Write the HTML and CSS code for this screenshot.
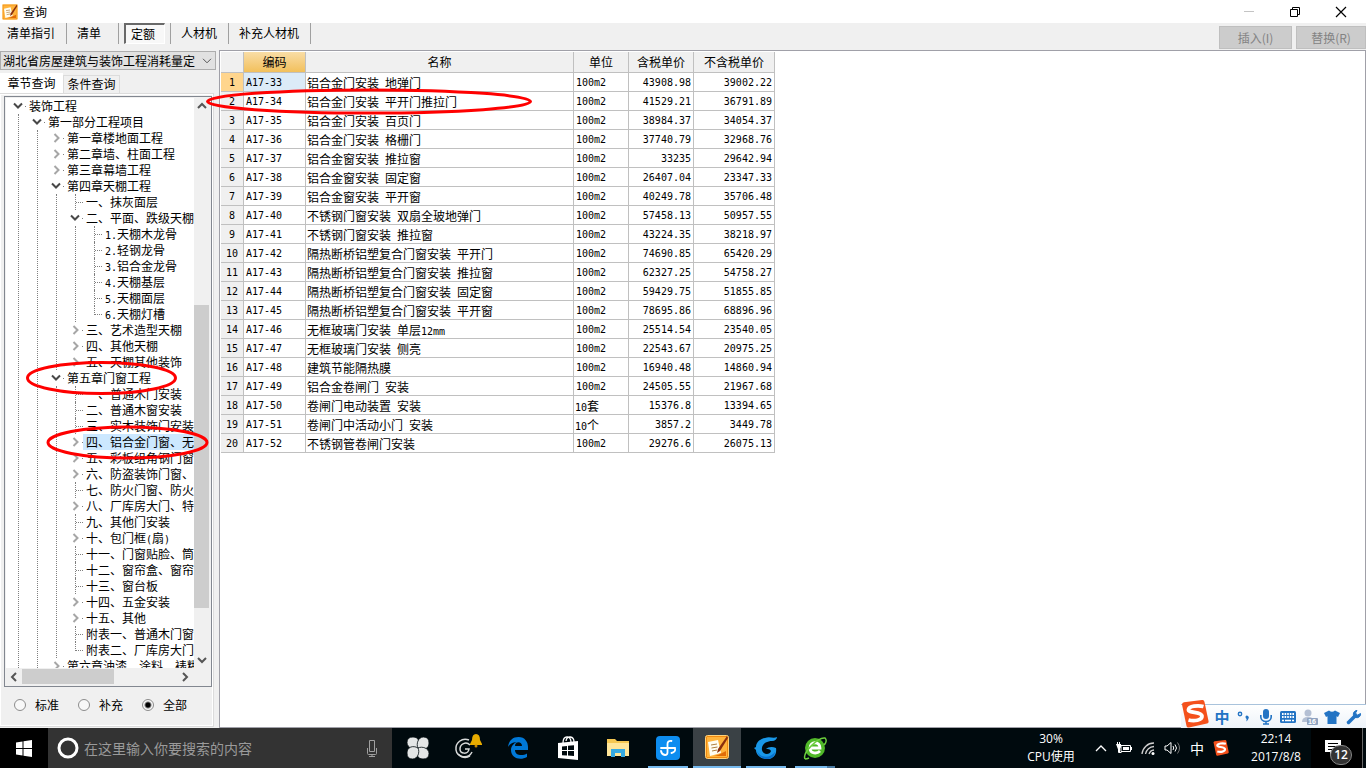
FILE: index.html
```html
<!DOCTYPE html>
<html lang="zh-CN">
<head>
<meta charset="utf-8">
<title>查询</title>
<link rel="stylesheet" href="styles.css">
</head>
<body>
<svg class="defs" aria-hidden="true">
  <symbol id="down" viewBox="0 0 10 8"><path d="M1 1.5l4 4 4-4" fill="none" stroke="#484848" stroke-width="2"/></symbol>
  <symbol id="right" viewBox="0 0 8 10"><path d="M1.5 1l4 4-4 4" fill="none" stroke="#a6a6a6" stroke-width="2"/></symbol>
  <symbol id="estimate" viewBox="0 0 24 24">
    <rect x=".5" y=".5" width="23" height="23" rx="2" fill="#f08a10" stroke="#ffd27a"/>
    <rect x="2" y="2" width="20" height="20" fill="#ffb43c"/>
    <path d="M3 7l10-2 3 13-11 3z" fill="#fffdf2"/>
    <path d="M6 10l6-1M6.500 13l6-1M7 16l5-1" stroke="#b08040" fill="none"/>
    <path d="M22 1l-9 13-1 4 3-2 8-13z" fill="#8a2f0c"/>
    <path d="M13 20l8-4v5H9z" fill="#e06c08"/>
  </symbol>
  <symbol id="sogou" viewBox="0 0 28 28">
    <path d="M1 4.500Q1 2.500 3 2.200L21 0q2-.2 2.500 2l4 19q.4 2-1.500 2.500L8 27.500q-2 .4-2.500-1.500z" fill="#f4511c"/>
    <path d="M22.500 6.500C17 5 8 6 7.500 9.500c-.5 4 13 1.500 13.500 6.500.3 4.500-8 5.500-13.500 4" fill="none" stroke="#fff" stroke-width="3.800"/>
  </symbol>
</svg>

<header class="titlebar">
  <svg class="app-icon"><use href="#estimate"/></svg>
  <h1 class="title">查询</h1>
  <div class="window-buttons">
    <button class="win" aria-label="最小化"><svg width="12" height="12"><path d="M1 5.500h10" stroke="#c4c4c4"/></svg></button>
    <button class="win" aria-label="还原"><svg width="12" height="12"><path d="M1.500 3.500h7v7h-7zM3.500 3V1.500h7v7H9" fill="none" stroke="#000"/></svg></button>
    <button class="win" aria-label="关闭"><svg width="12" height="12"><path d="M1 1l10 10M11 1L1 11" stroke="#000" stroke-width="1.200"/></svg></button>
  </div>
</header>

<nav class="toolbar">
  <div class="modes">
    <button class="mode">清单指引</button>
    <button class="mode">清单</button>
    <button class="mode pressed"><span class="well">定额</span></button>
    <button class="mode">人材机</button>
    <button class="mode">补充人材机</button>
  </div>
  <div class="actions">
    <button class="action" disabled>插入(I)</button>
    <button class="action" disabled>替换(R)</button>
  </div>
</nav>

<main class="work">
  <aside class="side">
    <div class="combo">
      <select class="combo-select" aria-label="定额库"><option>湖北省房屋建筑与装饰工程消耗量定</option></select>
      <svg class="combo-arrow" viewBox="0 0 10 6"><path d="M1 .8l4 4 4-4" fill="none" stroke="#555"/></svg>
    </div>
    <div class="tabs">
      <button class="tab current">章节查询</button>
      <button class="tab">条件查询</button>
    </div>
    <section class="page">
      <div class="tree-box">
        <div class="tree-row">
          <div class="tree">
            <ul class="list root">
              <li><div class="row"><span class="tg"><svg class="dn"><use href="#down"/></svg></span><span class="label">装饰工程</span></div>
                <ul class="list nested">
                  <li><div class="row"><span class="tg"><svg class="dn"><use href="#down"/></svg></span><span class="label">第一部分工程项目</span></div>
                    <ul class="list nested">
                      <li><div class="row"><span class="tg"><svg class="rt"><use href="#right"/></svg></span><span class="label">第一章楼地面工程</span></div></li>
                      <li><div class="row"><span class="tg"><svg class="rt"><use href="#right"/></svg></span><span class="label">第二章墙、柱面工程</span></div></li>
                      <li><div class="row"><span class="tg"><svg class="rt"><use href="#right"/></svg></span><span class="label">第三章幕墙工程</span></div></li>
                      <li><div class="row"><span class="tg"><svg class="dn"><use href="#down"/></svg></span><span class="label">第四章天棚工程</span></div>
                        <ul class="list nested">
                          <li><div class="row"><span class="leaf"></span><span class="label">一、抹灰面层</span></div></li>
                          <li><div class="row"><span class="tg"><svg class="dn"><use href="#down"/></svg></span><span class="label">二、平面、跌级天棚</span></div>
                            <ul class="list nested">
                              <li><div class="row"><span class="leaf"></span><span class="label"><span class="m">1.</span>天棚木龙骨</span></div></li>
                              <li><div class="row"><span class="leaf"></span><span class="label"><span class="m">2.</span>轻钢龙骨</span></div></li>
                              <li><div class="row"><span class="leaf"></span><span class="label"><span class="m">3.</span>铝合金龙骨</span></div></li>
                              <li><div class="row"><span class="leaf"></span><span class="label"><span class="m">4.</span>天棚基层</span></div></li>
                              <li><div class="row"><span class="leaf"></span><span class="label"><span class="m">5.</span>天棚面层</span></div></li>
                              <li><div class="row"><span class="leaf end"></span><span class="label"><span class="m">6.</span>天棚灯槽</span></div></li>
                            </ul>
                          </li>
                          <li><div class="row"><span class="tg"><svg class="rt"><use href="#right"/></svg></span><span class="label">三、艺术造型天棚</span></div></li>
                          <li><div class="row"><span class="tg"><svg class="rt"><use href="#right"/></svg></span><span class="label">四、其他天棚</span></div></li>
                          <li><div class="row"><span class="tg"><svg class="rt"><use href="#right"/></svg></span><span class="label">五、天棚其他装饰</span></div></li>
                        </ul>
                      </li>
                      <li><div class="row"><span class="tg"><svg class="dn"><use href="#down"/></svg></span><span class="label">第五章门窗工程</span></div>
                        <ul class="list nested">
                          <li><div class="row"><span class="leaf"></span><span class="label">一、普通木门安装</span></div></li>
                          <li><div class="row"><span class="leaf"></span><span class="label">二、普通木窗安装</span></div></li>
                          <li><div class="row"><span class="leaf"></span><span class="label">三、实木装饰门安装</span></div></li>
                          <li><div class="row"><span class="tg"><svg class="rt"><use href="#right"/></svg></span><span class="label selected">四、铝合金门窗、无</span></div></li>
                          <li><div class="row"><span class="tg"><svg class="rt"><use href="#right"/></svg></span><span class="label">五、彩板组角钢门窗</span></div></li>
                          <li><div class="row"><span class="tg"><svg class="rt"><use href="#right"/></svg></span><span class="label">六、防盗装饰门窗、</span></div></li>
                          <li><div class="row"><span class="leaf"></span><span class="label">七、防火门窗、防火</span></div></li>
                          <li><div class="row"><span class="tg"><svg class="rt"><use href="#right"/></svg></span><span class="label">八、厂库房大门、特</span></div></li>
                          <li><div class="row"><span class="leaf"></span><span class="label">九、其他门安装</span></div></li>
                          <li><div class="row"><span class="tg"><svg class="rt"><use href="#right"/></svg></span><span class="label">十、包门框<span class="m">(</span>扇<span class="m">)</span></span></div></li>
                          <li><div class="row"><span class="leaf"></span><span class="label">十一、门窗贴脸、筒</span></div></li>
                          <li><div class="row"><span class="leaf"></span><span class="label">十二、窗帘盒、窗帘</span></div></li>
                          <li><div class="row"><span class="leaf"></span><span class="label">十三、窗台板</span></div></li>
                          <li><div class="row"><span class="tg"><svg class="rt"><use href="#right"/></svg></span><span class="label">十四、五金安装</span></div></li>
                          <li><div class="row"><span class="tg"><svg class="rt"><use href="#right"/></svg></span><span class="label">十五、其他</span></div></li>
                          <li><div class="row"><span class="leaf"></span><span class="label">附表一、普通木门窗</span></div></li>
                          <li><div class="row"><span class="leaf end"></span><span class="label">附表二、厂库房大门</span></div></li>
                        </ul>
                      </li>
                      <li><div class="row"><span class="tg"><svg class="rt"><use href="#right"/></svg></span><span class="label">第六章油漆、涂料、裱糊</span></div></li>
                    </ul>
                  </li>
                </ul>
              </li>
            </ul>
          </div>
          <div class="vbar">
            <svg class="arrow"><path d="M4 10l4-4 4 4" /></svg>
            <div class="vtrack"><div class="vthumb"></div></div>
            <svg class="arrow"><path d="M4 6l4 4 4-4" /></svg>
          </div>
        </div>
        <div class="hbar">
          <svg class="arrow"><path d="M10 4L6 8l4 4" /></svg>
          <div class="htrack"><div class="hthumb"></div></div>
          <svg class="arrow"><path d="M6 4l4 4-4 4" /></svg>
        </div>
      </div>
      <div class="scope">
        <label class="choice"><input class="radio" type="radio" name="scope">标准</label>
        <label class="choice"><input class="radio" type="radio" name="scope">补充</label>
        <label class="choice"><input class="radio" type="radio" name="scope" checked>全部</label>
      </div>
    </section>
  </aside>

  <section class="content">
    <table class="grid">
      <colgroup><col class="c-no"><col class="c-code"><col class="c-name"><col class="c-unit"><col class="c-tax"><col class="c-net"></colgroup>
      <thead><tr><th></th><th class="hot">编码</th><th>名称</th><th>单位</th><th>含税单价</th><th>不含税单价</th></tr></thead>
      <tbody>
        <tr class="active"><th>1</th><td class="m">A17-33</td><td>铝合金门安装<span class="m"> </span>地弹门</td><td class="m">100m2</td><td class="m num">43908.98</td><td class="m num">39002.22</td></tr>
        <tr><th>2</th><td class="m">A17-34</td><td>铝合金门安装<span class="m"> </span>平开门推拉门</td><td class="m">100m2</td><td class="m num">41529.21</td><td class="m num">36791.89</td></tr>
        <tr><th>3</th><td class="m">A17-35</td><td>铝合金门安装<span class="m"> </span>百页门</td><td class="m">100m2</td><td class="m num">38984.37</td><td class="m num">34054.37</td></tr>
        <tr><th>4</th><td class="m">A17-36</td><td>铝合金门安装<span class="m"> </span>格栅门</td><td class="m">100m2</td><td class="m num">37740.79</td><td class="m num">32968.76</td></tr>
        <tr><th>5</th><td class="m">A17-37</td><td>铝合金窗安装<span class="m"> </span>推拉窗</td><td class="m">100m2</td><td class="m num">33235</td><td class="m num">29642.94</td></tr>
        <tr><th>6</th><td class="m">A17-38</td><td>铝合金窗安装<span class="m"> </span>固定窗</td><td class="m">100m2</td><td class="m num">26407.04</td><td class="m num">23347.33</td></tr>
        <tr><th>7</th><td class="m">A17-39</td><td>铝合金窗安装<span class="m"> </span>平开窗</td><td class="m">100m2</td><td class="m num">40249.78</td><td class="m num">35706.48</td></tr>
        <tr><th>8</th><td class="m">A17-40</td><td>不锈钢门窗安装<span class="m"> </span>双扇全玻地弹门</td><td class="m">100m2</td><td class="m num">57458.13</td><td class="m num">50957.55</td></tr>
        <tr><th>9</th><td class="m">A17-41</td><td>不锈钢门窗安装<span class="m"> </span>推拉窗</td><td class="m">100m2</td><td class="m num">43224.35</td><td class="m num">38218.97</td></tr>
        <tr><th>10</th><td class="m">A17-42</td><td>隔热断桥铝塑复合门窗安装<span class="m"> </span>平开门</td><td class="m">100m2</td><td class="m num">74690.85</td><td class="m num">65420.29</td></tr>
        <tr><th>11</th><td class="m">A17-43</td><td>隔热断桥铝塑复合门窗安装<span class="m"> </span>推拉窗</td><td class="m">100m2</td><td class="m num">62327.25</td><td class="m num">54758.27</td></tr>
        <tr><th>12</th><td class="m">A17-44</td><td>隔热断桥铝塑复合门窗安装<span class="m"> </span>固定窗</td><td class="m">100m2</td><td class="m num">59429.75</td><td class="m num">51855.85</td></tr>
        <tr><th>13</th><td class="m">A17-45</td><td>隔热断桥铝塑复合门窗安装<span class="m"> </span>平开窗</td><td class="m">100m2</td><td class="m num">78695.86</td><td class="m num">68896.96</td></tr>
        <tr><th>14</th><td class="m">A17-46</td><td>无框玻璃门安装<span class="m"> </span>单层<span class="m">12mm</span></td><td class="m">100m2</td><td class="m num">25514.54</td><td class="m num">23540.05</td></tr>
        <tr><th>15</th><td class="m">A17-47</td><td>无框玻璃门安装<span class="m"> </span>侧亮</td><td class="m">100m2</td><td class="m num">22543.67</td><td class="m num">20975.25</td></tr>
        <tr><th>16</th><td class="m">A17-48</td><td>建筑节能隔热膜</td><td class="m">100m2</td><td class="m num">16940.48</td><td class="m num">14860.94</td></tr>
        <tr><th>17</th><td class="m">A17-49</td><td>铝合金卷闸门<span class="m"> </span>安装</td><td class="m">100m2</td><td class="m num">24505.55</td><td class="m num">21967.68</td></tr>
        <tr><th>18</th><td class="m">A17-50</td><td>卷闸门电动装置<span class="m"> </span>安装</td><td><span class="m">10</span>套</td><td class="m num">15376.8</td><td class="m num">13394.65</td></tr>
        <tr><th>19</th><td class="m">A17-51</td><td>卷闸门中活动小门<span class="m"> </span>安装</td><td><span class="m">10</span>个</td><td class="m num">3857.2</td><td class="m num">3449.78</td></tr>
        <tr><th>20</th><td class="m">A17-52</td><td>不锈钢管卷闸门安装</td><td class="m">100m2</td><td class="m num">29276.6</td><td class="m num">26075.13</td></tr>
      </tbody>
    </table>
  </section>
</main>

<svg class="marks" width="560" height="480" aria-hidden="true">
  <g fill="none" stroke="#f00" stroke-width="3">
    <ellipse cx="369" cy="101.500" rx="161.500" ry="11.500"/>
    <ellipse cx="101.500" cy="378" rx="74" ry="15.500"/>
    <ellipse cx="127.500" cy="442.500" rx="79.500" ry="15.500"/>
  </g>
</svg>

<div class="ime">
  <svg class="ime-logo"><use href="#sogou"/></svg>
  <button class="ime-key zh">中</button>
  <button class="ime-key" aria-label="标点"><svg width="16" height="16" viewBox="0 0 16 16"><circle cx="4" cy="5" r="1.700" fill="none" stroke="#2374c4" stroke-width="1.400"/><path d="M9.500 7.500a1.800 1.800 0 1 1 3 2q-.5 2-2.500 3 .8-1.500.6-2.500-1.300-.8-1.100-2.500z" fill="#2374c4"/></svg></button>
  <button class="ime-key" aria-label="语音"><svg width="16" height="16" viewBox="0 0 16 16"><rect x="5" y="0" width="6" height="10" rx="3" fill="#2374c4"/><path d="M2.800 6v2a5.200 4.500 0 0 0 10.400 0V6M8 12v3M5 15h6" fill="none" stroke="#2374c4" stroke-width="1.600"/></svg></button>
  <button class="ime-key" aria-label="键盘"><svg width="16" height="16" viewBox="0 0 16 16"><rect x="0" y="2" width="16" height="12" rx="1.500" fill="#2374c4"/><path d="M2 5h12M2 8h12" stroke="#fff" stroke-width="2" stroke-dasharray="1.600 1"/><path d="M2 11.500h2M5 11.500h6M12 11.500h2" stroke="#fff" stroke-width="1.600"/></svg></button>
  <button class="ime-key" aria-label="账户"><svg width="16" height="16" viewBox="0 0 16 16"><circle cx="6" cy="4" r="3.500" fill="#b4c0d4"/><path d="M0 13q0-5 6-5t6 5z" fill="#b4c0d4"/><rect x="5" y="9" width="11" height="7" rx="1" fill="#8fa2c0"/><text class="tiny" x="6" y="15">16</text></svg></button>
  <button class="ime-key" aria-label="皮肤"><svg width="16" height="16" viewBox="0 0 16 16"><path d="M5 1.500q3 2.500 6 0L16 4l-2 4-1.500-.8V15h-9V7.200L2 8 0 4z" fill="#2374c4"/></svg></button>
  <button class="ime-key" aria-label="工具"><svg width="16" height="16" viewBox="0 0 16 16"><path d="M2.500 13.500L9 7" stroke="#2374c4" stroke-width="3.500" stroke-linecap="round"/><path d="M14.500 4.500A3.600 3.600 0 1 1 11 1.500L9.500 4l2 2.200z" fill="#2374c4" stroke="#2374c4"/></svg></button>
</div>

<footer class="taskbar">
  <button class="start" aria-label="开始"><svg width="16" height="17"><path d="M0 2.500l6.500-1V8H0zM7.500 1.300L16 0v8H7.500zM0 9h6.500v6.500l-6.500-1zM7.500 9H16v8l-8.500-1.300z" fill="#fff"/></svg></button>
  <div class="search">
    <svg class="cortana" width="22" height="22"><circle cx="11" cy="11" r="9" fill="none" stroke="#fff" stroke-width="3"/></svg>
    <input class="query" type="text" placeholder="在这里输入你要搜索的内容" aria-label="搜索">
    <svg class="mic" width="12" height="17"><path d="M3.500.5h5v11h-5zM1.500 8v5.500q0 1 1 1h7q1 0 1-1V8M6 14.500v2M3 16.500h6" fill="none" stroke="#a0a0a0"/></svg>
  </div>
  <div class="apps wide">
    <button class="app" aria-label="应用"><svg width="22" height="22" viewBox="0 0 22 22"><g fill="#e4e6e6" stroke="#000a0e" stroke-width=".8"><path id="petal" d="M11 11C7 13 0 11 0 5.500Q0 0 6 0c6 0 8 6 5 11z"/><use href="#petal" transform="rotate(90 11 11)"/><use href="#petal" transform="rotate(180 11 11)"/><use href="#petal" transform="rotate(270 11 11)"/></g></svg></button>
    <button class="app" aria-label="提醒"><svg width="28" height="28" viewBox="0 0 28 28"><g fill="none" stroke="#d8dada" stroke-width="1.500"><path d="M15 6C8 3 1 9 2 16s12 10 16 2"/><path d="M16 11c-4-4-10-1-10 4s8 6 9 0h-4"/><path d="M4 20q6 6 12 2"/></g><path d="M22 0q4 0 4 6l2 4v1H16v-1l2-4q0-6 4-6z" fill="#e8ac00"/><circle cx="22" cy="12" r="1.500" fill="#c88a00"/></svg></button>
    <button class="app" aria-label="Edge"><svg width="22" height="22" viewBox="0 0 22 22"><path d="M1 10C2 3 6 0 11.500 0 18 0 21 5 21 10v3H8c0 6 8 6 12 3.500V20c-7 4-16 1-16-7 0-4 3-7 6-8-5 0-8 3-9 5zm7-1h7c0-5-7-5-7 0z" fill="#0078d7" fill-rule="evenodd"/></svg></button>
    <button class="app" aria-label="商店"><svg width="22" height="24" viewBox="0 0 22 24"><path d="M1 7l20-2v19L1 22z" fill="#fff"/><path d="M6 7c0-8 8-8 8-1M9 5c1-6 8-5 8 1" fill="none" stroke="#fff" stroke-width="1.300"/><path d="M5 10.500l5-.5v4H5zM11 9.800l6-.6V14h-6zM5 15h5v4.500l-5-.3zM11 15h6v5l-6-.4z" fill="#000a0e"/></svg></button>
    <button class="app" aria-label="资源管理器"><svg width="22" height="20" viewBox="0 0 22 20"><path d="M0 1h8l2 2h12v15H0z" fill="#f5c752"/><path d="M0 5h22v13H0z" fill="#ffe599"/><path d="M4 11h14v8h-4v-4H8v4H4z" fill="#36a9e1"/></svg></button>
  </div>
  <div class="apps">
    <button class="app open" aria-label="同步"><svg width="24" height="24" viewBox="0 0 24 24"><rect width="24" height="24" rx="4" fill="#0d8df0"/><path d="M15.500 5q-4-.5-4 3v8.500q0 2.500-2.500 2.500-3.500-.5-4-4M5 12h14q1 4-3.500 5" fill="none" stroke="#fff" stroke-width="1.800" stroke-linecap="round"/></svg></button>
    <button class="app focused" aria-label="计价"><svg width="24" height="24"><use href="#estimate"/></svg></button>
    <button class="app open" aria-label="广联达"><svg width="24" height="24" viewBox="0 0 24 24"><path d="M23 1c-4 2-7-1-12 1C5 3 2 7 2 11l-2 1 2 2c0 5 5 9 11 9 7 0 10-5 9-11-4-2-8-1-10 1 2 0 4 0 5 2-1 4-8 4-9-1-1-6 5-9 10-9 3 0 5-2 5-4z" fill="#1998e8"/><path d="M3 15c3 7 13 8 18 1-1 10-16 9-18-1z" fill="#0870cc"/></svg></button>
    <button class="app open last" aria-label="浏览器"><svg width="24" height="24" viewBox="0 0 24 24"><circle cx="12" cy="12" r="10" fill="#50b829"/><path d="M7 12h10c0-7-10-7-10 0 0 6 7 6 10 3" fill="none" stroke="#fff" stroke-width="2.800"/><path d="M2 23C-1 17 15 1 22 2c3 3-1 7-1 7M2 23q2 0 4-1" fill="none" stroke="#6cd03d" stroke-width="1.500"/></svg></button>
  </div>
  <div class="tray">
    <div class="readout cpu"><span>30%</span><span>CPU使用</span></div>
    <div class="tray-icons">
      <svg width="12" height="8"><path d="M1 7l5-5 5 5" fill="none" stroke="#fff" stroke-width="1.300"/></svg>
      <svg width="16" height="12" viewBox="0 0 16 12"><path d="M5 3.500h9.500v6H5z" fill="none" stroke="#fff"/><path d="M7 5h6v3H7zM15 5h1v3h-1zM0 2h5v3q0 1-1 1v4H3" fill="#fff"/><path d="M1.500 0v2M3.500 0v2M2.500 6v4.500h3" stroke="#fff" fill="none"/></svg>
      <svg width="14" height="14" viewBox="0 0 14 14"><path d="M1 13A12 12 0 0 1 13 2M4.500 13A9 9 0 0 1 13 5.500M8 13a6 6 0 0 1 5-4" fill="none" stroke="#d0d0d0" stroke-width="1.300"/><circle cx="12" cy="12.500" r="1.500" fill="#fff"/></svg>
      <svg width="17" height="14" viewBox="0 0 17 14"><path d="M1 5h2l4-3.500v11L3 9H1z" fill="none" stroke="#fff"/><path d="M9 5q1.500 2 0 4M11 3.500q3 3.500 0 7" fill="none" stroke="#fff"/><path d="M13.500 1.500q4 5.500 0 11" fill="none" stroke="#777"/></svg>
      <span class="lang">中</span>
      <svg width="16" height="16"><use href="#sogou"/></svg>
    </div>
    <div class="readout clock"><span>22:14</span><span>2017/8/8</span></div>
    <button class="notice" aria-label="通知"><svg width="18" height="17"><path d="M0 0h16v12H8l-3 4v-4H0z" fill="#fff"/><path d="M3 3.500h10M3 6.500h10M3 9.500h7" stroke="#000"/></svg><span class="badge">12</span></button>
  </div>
</footer>
</body>
</html>
```
FILE: styles.css
```css
* { box-sizing: border-box; }
body {
  margin: 0;
  height: 100vh;
  display: flex;
  flex-direction: column;
  overflow: hidden;
  position: relative;
  background: #f0f0f0;
  color: #000;
  font: 12px/16px "Noto Sans CJK SC", sans-serif;
}
button {
  margin: 0;
  padding: 0;
  border: 0;
  background: none;
  color: inherit;
  font: inherit;
}
svg { display: block; flex: none; }
.defs { position: absolute; width: 0; height: 0; }
.m { font-family: "DejaVu Sans Mono", monospace; font-size: 10px; white-space: pre; }
span.m { line-height: 10px; }

/* title bar */
.titlebar {
  display: flex;
  align-items: center;
  flex: none;
  height: 23px;
  padding-left: 2px;
  background: #fff;
}
.app-icon { width: 16px; height: 16px; }
.title { margin: 0 0 0 5px; font-size: 12px; font-weight: 400; }
.window-buttons { display: flex; margin-left: auto; padding-right: 2px; }
.win { display: grid; place-items: center; width: 46px; height: 22px; }

/* toolbar */
.toolbar {
  display: flex;
  justify-content: space-between;
  flex: none;
  height: 27px;
}
.modes { display: flex; height: 21px; }
.mode { padding: 0 11px 2px 10px; border-right: 1px solid #a0a0a0; }
.mode:first-child { padding-left: 7px; }
.mode:nth-child(2) { padding-right: 17px; }
.mode.pressed { padding: 0 5px; }
.well {
  display: block;
  height: 21px;
  padding: 1px 9px 0 5px;
  border: 1px solid #fff;
  border-top: 2px solid #696969;
  border-left: 2px solid #696969;
  background: #f8f8f8;
  line-height: 16px;
}
.actions { display: flex; gap: 4px; padding-top: 3px; }
.action {
  width: 73px;
  height: 23px;
  border: 1px solid #bfbfbf;
  background: #ccc;
  color: #838383;
}
.action:last-child { width: 70px; }

/* work area */
.work { display: flex; flex: 1; min-height: 0; }
.side {
  display: flex;
  flex-direction: column;
  flex: none;
  width: 219px;
  padding: 1px 5px 1px 0;
}
.combo { position: relative; margin-right: -2px; }
.combo-select {
  display: block;
  width: 100%;
  height: 19px;
  padding: 0 20px 0 2px;
  appearance: none;
  border: 1px solid #adadad;
  border-radius: 0;
  background: #e1e1e1;
  color: #000;
  font: inherit;
  line-height: 16px;
}
.combo-arrow { position: absolute; right: 4px; top: 7px; width: 10px; height: 6px; }
.tabs { display: flex; align-items: flex-end; height: 23px; }
.tab { height: 18px; width: 57px; padding-bottom: 1px; border: 1px solid #dcdcdc; border-bottom: 0; }
.tab.current { height: 20px; width: 63px; padding-bottom: 2px; background: #fff; border-color: #fff; }
.page {
  display: flex;
  flex-direction: column;
  flex: 1;
  min-height: 0;
  border: 1px solid #dcdcdc;
  border-left: 0;
  padding: 2px 1px 0 4px;
  box-shadow: inset 0 0 0 1px #fff;
}
.tree-box {
  display: flex;
  flex-direction: column;
  flex: 1;
  min-height: 0;
  border: 1px solid #828790;
  padding: 1px;
  background: #f0f0f0;
}
.tree-row { display: flex; flex: 1; min-height: 0; }
.tree { flex: 1; min-width: 0; overflow: hidden; background: #fff; }
.list { margin: 0; padding: 0; list-style: none; }
.root { padding-left: 3px; }
.nested { margin-left: 9px; padding-left: 9px; border-left: 1px dotted #808080; }
.row { display: flex; height: 16px; white-space: nowrap; }
.tg { display: flex; align-items: center; flex: none; width: 17px; padding-left: 4px; }
.tg::after { content: ""; width: 1px; height: 1px; margin-left: auto; background: #808080; }
.dn { width: 10px; height: 8px; }
.rt { width: 8px; height: 10px; margin-left: 2px; }
.leaf {
  flex: none;
  width: 8px;
  height: 16px;
  margin-left: 9px;
  border-left: 1px dotted #808080;
}
.leaf::after { content: ""; display: block; margin-top: 8px; border-top: 1px dotted #808080; }
.leaf.end { height: 9px; }
.label { flex: none; padding-left: 3px; }
.label.selected { background: #cce8ff; }
.vbar { display: flex; flex-direction: column; width: 16px; padding-right: 1px; }
.arrow { width: 16px; height: 16px; fill: none; stroke: #555; stroke-width: 2; }
.vtrack { flex: 1; padding-top: 191px; }
.vthumb { height: 303px; background: #cdcdcd; }
.hbar { display: flex; align-items: center; height: 17px; padding-right: 17px; flex: none; }
.htrack { flex: 1; }
.hthumb { width: 92px; height: 15px; background: #cdcdcd; }
.scope { display: flex; align-items: center; flex: none; height: 39px; padding: 0 0 3px 10px; }
.choice { display: flex; align-items: center; gap: 9px; width: 64px; }
.radio {
  appearance: none;
  width: 12px;
  height: 12px;
  margin: 0;
  border: 1px solid #8c8c8c;
  border-radius: 50%;
  background: #f8f8f8;
}
.radio:checked { background: radial-gradient(circle, #000 2px, #f8f8f8 4px); }

/* quota grid */
.content {
  flex: 1;
  min-width: 0;
  border: 1px solid #a0a0a8;
  padding: 1px;
  background: #fff;
  overflow: hidden;
}
.grid { table-layout: fixed; width: 554px; border-collapse: separate; border-spacing: 0; }
.c-no { width: 23px; }
.c-code { width: 62px; }
.c-name { width: 268px; }
.c-unit { width: 55px; }
.c-tax { width: 65px; }
.c-net { width: 81px; }
.grid th, .grid td {
  height: 19px;
  padding: 1px 2px 0 1px;
  border-right: 1px solid #c0c0c0;
  border-bottom: 1px solid #c0c0c0;
  line-height: 16px;
  text-align: left;
  vertical-align: middle;
  white-space: nowrap;
  overflow: hidden;
}
.grid .m { padding-left: 2px; }
.grid span.m { padding: 0; }
.grid th { background: #f0f0f0; font-weight: 400; text-align: center; }
.grid thead th { height: 21px; padding: 0; }
.grid thead .hot { background: linear-gradient(#f9dda6, #f2c05c); }
.grid tbody th { padding: 1px 0 0; font-family: "DejaVu Sans Mono", monospace; font-size: 10px; }
.grid .active th { background: #ffd58d; }
.grid .active td:nth-child(2) { background: #dcebf8; }
.grid .num { text-align: right; }
.marks { position: absolute; left: 0; top: 0; pointer-events: none; }

/* input method bar floats over the window */
.ime {
  position: absolute;
  right: 0;
  bottom: 40px;
  display: flex;
  align-items: center;
  gap: 6px;
  height: 24px;
  padding-right: 4px;
  border-top: 1px solid #a9c3dc;
  background: linear-gradient(#fff, #edf3f9);
}
.ime-logo { width: 28px; height: 28px; margin: -5px -1px 0 0; }
.ime-key { display: grid; place-items: center; width: 16px; height: 16px; }
.zh { color: #2374c4; font-size: 15px; font-weight: 700; }
.tiny { fill: #fff; font: 700 7px "Liberation Sans", sans-serif; }

/* taskbar */
.taskbar {
  display: flex;
  flex: none;
  height: 40px;
  background: #000a0e;
  color: #fff;
}
.start { display: grid; place-items: center; width: 48px; background: #000; }
.search {
  display: flex;
  align-items: center;
  width: 344px;
  padding: 0 14px 0 9px;
  background: #333;
}
.query {
  flex: 1;
  min-width: 0;
  padding: 0 0 0 5px;
  border: 0;
  background: none;
  color: #fff;
  font: 14px/20px "Noto Sans CJK SC", sans-serif;
}
.query::placeholder { color: #9a9a9a; }
.apps { display: flex; gap: 1px; }
.apps.wide { gap: 2px; padding: 0 2px; }
.app { display: grid; place-items: center; width: 48px; }
.app.open {
  background: linear-gradient(#76b9ed, #76b9ed) center bottom / 40px 2px no-repeat;
}
.app.focused { background: #3a4145; border-bottom: 2px solid #76b9ed; }
.app.open.last { background-image: linear-gradient(90deg, #76b9ed 32px, #4a7ba3 32px); }
.tray { display: flex; margin-left: auto; }
.readout {
  display: flex;
  flex-direction: column;
  justify-content: center;
  align-items: center;
  font: 12px/18px "Open Sans", "Noto Sans CJK SC", sans-serif;
}
.cpu { width: 60px; margin-right: 14px; }
.tray-icons { display: flex; align-items: center; gap: 9px; }
.tray-icons .lang { font-size: 14px; }
.clock { width: 70px; margin-left: 12px; }
.notice {
  position: relative;
  display: flex;
  width: 52px;
  margin-right: 3px;
  padding: 12px 0 0 14px;
  border-right: 1px solid #666;
  background: #000;
}
.badge {
  position: absolute;
  left: 19px;
  top: 17px;
  width: 22px;
  height: 20px;
  border: 1px solid #888;
  border-radius: 10px;
  background: #333;
  font: 600 12px/18px "Open Sans", sans-serif;
  text-align: center;
}
```
